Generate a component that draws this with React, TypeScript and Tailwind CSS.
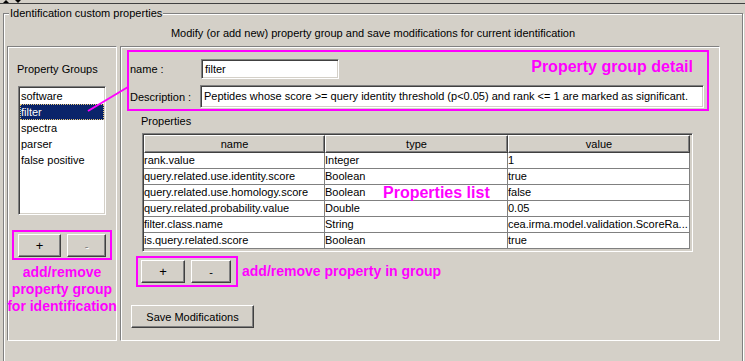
import React from 'react';

const groups = ['software', 'filter', 'spectra', 'parser', 'false positive'];

const rows = [
  ['rank.value', 'Integer', '1'],
  ['query.related.use.identity.score', 'Boolean', 'true'],
  ['query.related.use.homology.score', 'Boolean', 'false'],
  ['query.related.probability.value', 'Double', '0.05'],
  ['filter.class.name', 'String', 'cea.irma.model.validation.ScoreRa...'],
  ['is.query.related.score', 'Boolean', 'true'],
];

const Btn: React.FC<{ className?: string; disabled?: boolean; children: React.ReactNode }> = ({
  className = '',
  disabled,
  children,
}) => (
  <div
    className={`flex items-center justify-center h-[23px] bg-[#d4d0c8] border border-t-white border-l-white border-b-[#404040] border-r-[#404040] shadow-[inset_-1px_-1px_0_#808080] ${
      disabled ? 'text-[#808080] [text-shadow:1px_1px_0_white]' : 'text-black'
    } ${className}`}
  >
    {children}
  </div>
);

const App: React.FC = () => {
  return (
    <div className="relative w-[745px] h-[361px] overflow-hidden bg-[#d4d0c8] text-[11px] leading-[14px] text-black font-['Liberation_Sans',Arial,sans-serif]">
      {/* split pane divider */}
      <div className="flex h-[4px] items-start gap-[6px] pl-[3px] border-b border-[#404040]">
        <svg width="6" height="3" viewBox="0 0 6 3">
          <path d="M0 3 L3 0 L6 3 Z" fill="black" />
        </svg>
        <svg width="6" height="3" viewBox="0 0 6 3">
          <path d="M0 0 L6 0 L3 3 Z" fill="black" />
        </svg>
      </div>

      {/* titled border */}
      <div className="relative ml-[3px] mt-[9px] w-[740px] h-[360px] border border-[#808080] shadow-[inset_1px_1px_0_white,1px_1px_0_white]">
        <span className="absolute left-[5px] -top-[8px] px-[1px] bg-[#d4d0c8]">
          Identification custom properties
        </span>

        <div className="pt-[12px] text-center">
          Modify (or add new) property group and save modifications for current identification
        </div>

        <div className="flex gap-[3px] pl-[3px] mt-[6px]">
          {/* left panel */}
          <div className="flex flex-col w-[110px] h-[295px] border border-t-[#808080] border-l-[#808080] border-b-white border-r-white shadow-[inset_1px_1px_0_white]">
            <div className="mt-[15px] pl-[9px]">Property Groups</div>
            <div className="ml-[10px] mt-[10px] w-[88px] h-[129px] bg-white border border-t-[#808080] border-l-[#808080] border-b-white border-r-white shadow-[inset_1px_1px_0_#404040,inset_-1px_-1px_0_#d4d0c8] p-[1px]">
              {groups.map((g) =>
                g === 'filter' ? (
                  <div
                    key={g}
                    className="h-[16px] leading-[14px] bg-[#0a246a] text-white border border-dotted border-[#e8c878]"
                  >
                    {g}
                  </div>
                ) : (
                  <div key={g} className="h-[16px] leading-[16px] pl-[1px]">
                    {g}
                  </div>
                )
              )}
            </div>
            <div className="ml-[4px] mt-[15px] flex w-[100px] gap-[6px] border-2 border-[#ff00ff] pl-[4px] pt-[2px] pb-[1px]">
              <Btn className="w-[43px] text-[13px]">+</Btn>
              <Btn className="w-[39px]" disabled>
                -
              </Btn>
            </div>
            <div className="mt-[4px] flex flex-col items-center whitespace-nowrap text-[14px] leading-[17px] font-bold text-[#ff00ff]">
              <span>add/remove</span>
              <span>property group</span>
              <span>for identification</span>
            </div>
          </div>

          {/* right panel */}
          <div className="flex flex-col w-[600px] h-[295px] border border-t-[#808080] border-l-[#808080] border-b-white border-r-white shadow-[inset_1px_1px_0_white]">
            <div className="ml-[6px] mt-[3px] w-[582px] h-[61px] border-2 border-[#ff00ff] pl-[1px] pt-[6px]">
              <div className="flex items-center">
                <span className="w-[71px]">name :</span>
                <div className="w-[138px] h-[20px] bg-white pl-[3px] leading-[18px] border border-t-[#808080] border-l-[#808080] border-b-white border-r-white shadow-[inset_1px_1px_0_#404040,inset_-1px_-1px_0_#d4d0c8]">
                  filter
                </div>
                <span className="ml-auto mr-[14px] mb-[3px] text-[16px] leading-[18px] font-bold text-[#ff00ff]">
                  Property group detail
                </span>
              </div>
              <div className="flex items-center mt-[6px]">
                <span className="w-[70px]">Description :</span>
                <div className="w-[504px] h-[23px] bg-white pl-[3px] leading-[21px] border border-t-[#808080] border-l-[#808080] border-b-white border-r-white shadow-[inset_1px_1px_0_#404040,inset_-1px_-1px_0_#d4d0c8]">
                  Peptides whose score &gt;= query identity threshold (p&lt;0.05) and rank &lt;= 1 are marked as significant.
                </div>
              </div>
            </div>

            <div className="ml-[20px] mt-[3px]">Properties</div>

            <div className="relative ml-[21px] mt-[5px] w-[551px] h-[119px] border border-t-[#808080] border-l-[#808080] border-b-white border-r-white shadow-[inset_1px_1px_0_#404040,inset_-1px_-1px_0_#d4d0c8] p-[1px]">
              <div className="grid grid-cols-[181px_183px_182px]">
                {['name', 'type', 'value'].map((h) => (
                  <div
                    key={h}
                    className="h-[18px] flex items-center justify-center border border-t-white border-l-white border-b-[#404040] border-r-[#404040] shadow-[inset_-1px_-1px_0_#808080]"
                  >
                    {h}
                  </div>
                ))}
                {rows.map((r) =>
                  r.map((c, i) => (
                    <div
                      key={r[0] + i}
                      className="h-[16px] leading-[15px] bg-white whitespace-nowrap overflow-hidden border-b border-r border-[#808080]"
                    >
                      {c}
                    </div>
                  ))
                )}
              </div>
              <span className="absolute left-[240px] top-[50px] text-[16px] leading-[18px] font-bold text-[#ff00ff]">
                Properties list
              </span>
            </div>

            <div className="flex items-center ml-[15px] mt-[4px]">
              <div className="flex gap-[6px] border-2 border-[#ff00ff] pl-[3px] pr-[5px] pt-[2px] pb-[2px]">
                <Btn className="w-[44px] text-[13px]">+</Btn>
                <Btn className="w-[40px]">-</Btn>
              </div>
              <span className="ml-[4px] text-[14px] leading-[17px] font-bold text-[#ff00ff]">
                add/remove property in group
              </span>
            </div>

            <div className="ml-[10px] mt-[18px]">
              <Btn className="w-[123px]">Save Modifications</Btn>
            </div>
          </div>
        </div>
      </div>

      {/* pointer line from selected group to detail box */}
      <svg className="absolute left-0 top-0 pointer-events-none" width="745" height="361">
        <line x1="88" y1="111" x2="128" y2="87" stroke="#ff00ff" strokeWidth="2" />
      </svg>
    </div>
  );
};

export default App;
